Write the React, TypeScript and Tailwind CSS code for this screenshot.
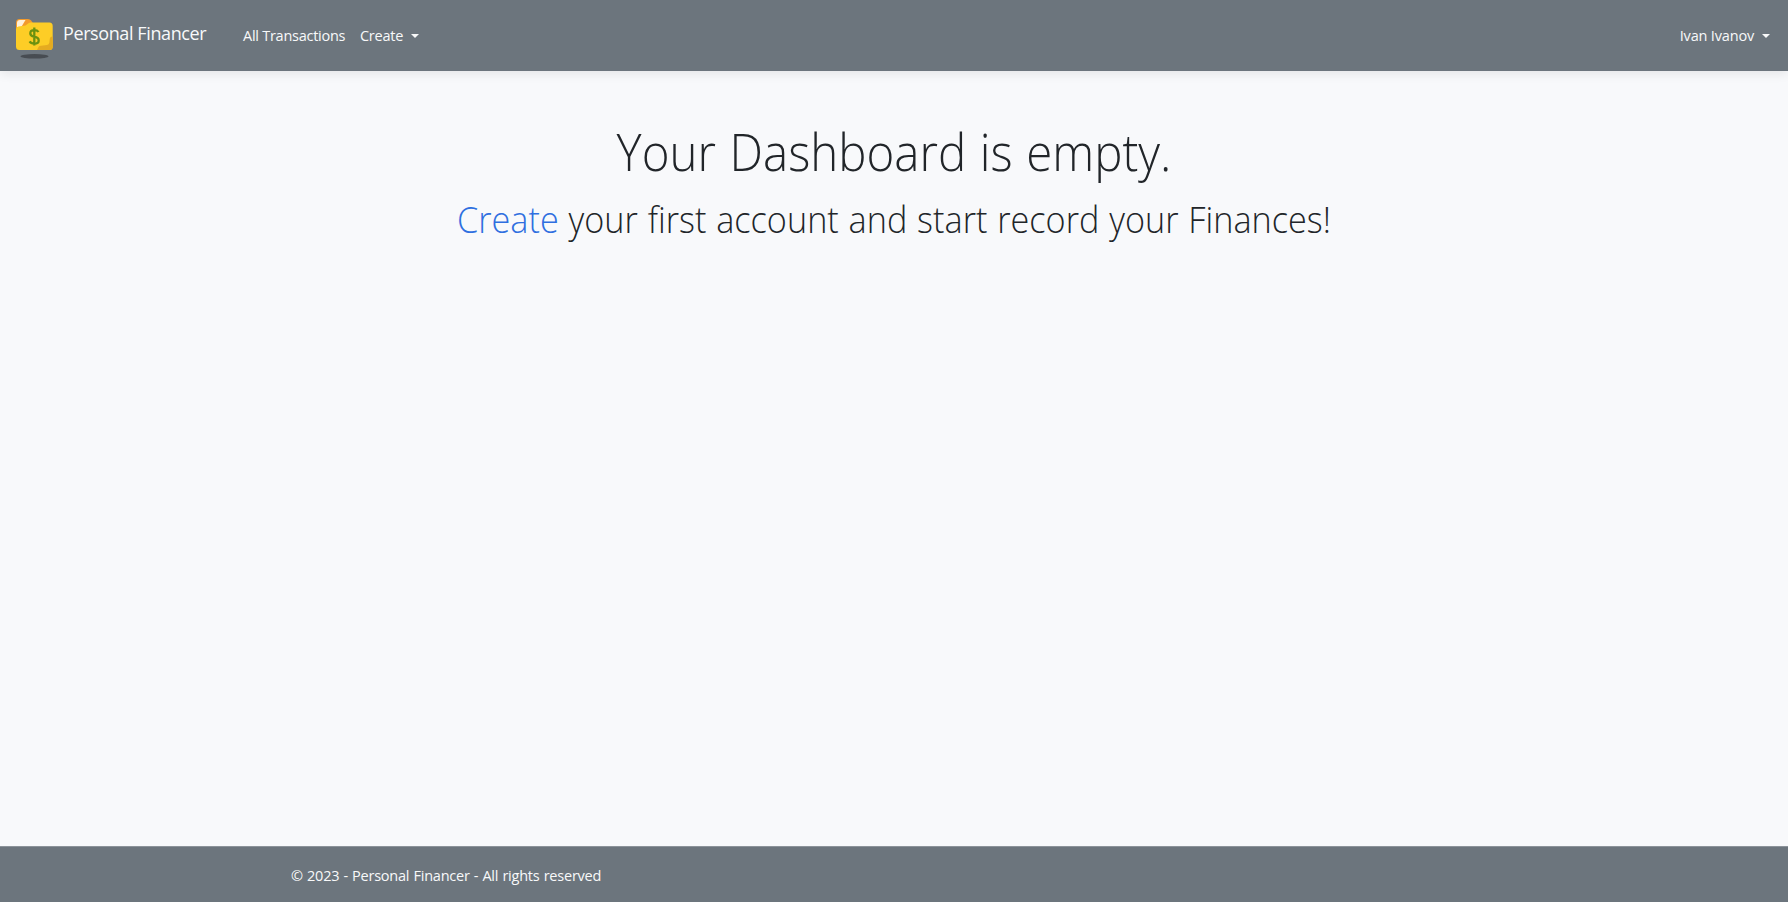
import React from "react";

function Logo() {
  return (
    <svg width="40" height="42" viewBox="0 0 40 42" aria-hidden="true">
      <path d="M1 4.500Q1 1 4.500 1h8.500q2 0 3.200 1.600L18.500 6v6H1z" fill="#f39a2b" />
      <path d="M2 5Q2 2 5 2H10.500L6 9.500H2z" fill="#fff0d8" />
      <path d="M1 11.500Q1 9 3.500 8.500l7-1 3-2.300q1-.7 2-.7H34.500q3.200 0 3.200 3.500V28.500q0 3.500-3.200 3.500H4.500q-3.500 0-3.500-3.500z" fill="#fdcd26" />
      <path d="M37.700 18.500V28.500q0 3.500-3.200 3.500H22l1.500-3q.8-1.200 2.500-1.300l6-.7q2-.3 2.300-2.300l.5-4q.2-1.700 1.500-2z" fill="#e5ab20" />
      <ellipse cx="19.500" cy="38.300" rx="14" ry="2.300" fill="#474c52" />
      <path d="M23.500 14q-1.200-1.900-4.200-1.900-4 0-4 3.100 0 2.700 4 3.500 4.400.8 4.400 3.700 0 3.200-4.400 3.200-3.400 0-4.700-2.200M19.300 9.500v18" fill="none" stroke="#6c9110" strokeWidth="2.300" />
    </svg>
  );
}

function Caret() {
  return <span className="mt-px ml-[8px] h-0 w-0 border-x-4 border-t-4 border-x-transparent border-t-current" />;
}

export default function App() {
  return (
    <div className="flex min-h-screen flex-col bg-[#f8f9fb] font-['Open_Sans','Noto_Sans',sans-serif] text-[#212529]">
      <header className="flex h-[71px] items-center bg-[#6c757d] pr-[18px] pl-[15px] text-[#f8f9fa] shadow-[0_3px_10px_rgba(0,0,0,0.08)]">
        <a href="#" className="flex items-center">
          <span className="mt-[7px]"><Logo /></span>
          <span className="-mt-[4px] ml-2 w-[145px] whitespace-nowrap text-[18px] tracking-[-0.4px]">Personal Financer</span>
        </a>
        <nav className="ml-[35px] flex flex-1 items-center text-[14.500px] whitespace-nowrap tracking-[-0.26px]">
          <a href="#" className="w-[117px]">All Transactions</a>
          <a href="#" className="flex items-center">Create<Caret /></a>
          <a href="#" className="ml-auto flex items-center tracking-[-0.18px]">Ivan Ivanov<Caret /></a>
        </nav>
      </header>
      <main className="flex-1 pt-[44px] text-center font-light">
        <h1 className="scale-x-[0.912] text-[52px] leading-[72px] [word-spacing:1.5px]">Your Dashboard is empty.</h1>
        <p className="mt-[7px] scale-x-[0.925] text-[37px] leading-[50px] [word-spacing:1px]">
          <a href="#" className="text-[#2f6fe0]">Create</a> your first account and start record your Finances!
        </p>
      </main>
      <footer className="flex h-14 items-center border-t border-[#8c939a] bg-[#6c757d] pt-[2px] pl-[291px] text-[14.500px] tracking-[-0.22px] text-[#f8f9fa] [word-spacing:0.6px]">
        © 2023 - Personal Financer - All rights reserved
      </footer>
    </div>
  );
}
